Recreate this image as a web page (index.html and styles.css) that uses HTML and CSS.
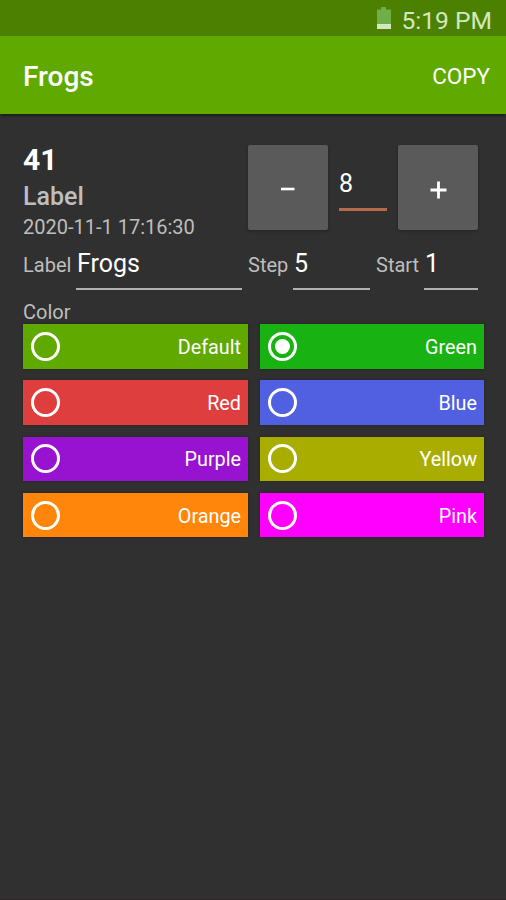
FILE: index.html
```html
<!DOCTYPE html>
<html lang="en">
<head>
<meta charset="utf-8">
<title>Frogs</title>
<link rel="stylesheet" href="styles.css">
</head>
<body>
<div class="status">
  <svg class="battery" width="16" height="23" viewBox="0 0 16 23"><path d="M1 2.500h4V0h5v2.500h5V17H1z" fill="#6fae48"/><path d="M1 17h14v5H1z" fill="#d3e8c0"/></svg>
  <span class="time">5:19 PM</span>
</div>
<header class="appbar"><h1 class="title">Frogs</h1><span class="copy">COPY</span></header>
<main class="content">
  <section class="top">
    <div class="info">
      <div class="count">41</div>
      <div class="name">Label</div>
      <div class="date">2020-11-1 17:16:30</div>
    </div>
    <div class="step-btn"><svg width="80" height="85" viewBox="0 0 80 85"><path d="M33 44h13.500" stroke="#fff" stroke-width="2.600"/></svg></div>
    <div class="amount">8</div>
    <div class="step-btn"><svg width="80" height="85" viewBox="0 0 80 85"><path d="M32.500 45h16M40.500 36.500v17" stroke="#fff" stroke-width="2.800"/></svg></div>
  </section>
  <section class="fields">
    <span class="caption caption-label">Label</span><span class="input input-label">Frogs</span>
    <span class="caption caption-step">Step</span><span class="input input-step">5</span>
    <span class="caption caption-start">Start</span><span class="input input-start">1</span>
  </section>
  <div class="color-title">Color</div>
  <section class="colors">
    <div class="color default"><span class="radio"></span><span>Default</span></div>
    <div class="color green"><span class="radio checked"></span><span>Green</span></div>
    <div class="color red"><span class="radio"></span><span>Red</span></div>
    <div class="color blue"><span class="radio"></span><span>Blue</span></div>
    <div class="color purple"><span class="radio"></span><span>Purple</span></div>
    <div class="color yellow"><span class="radio"></span><span>Yellow</span></div>
    <div class="color orange"><span class="radio"></span><span>Orange</span></div>
    <div class="color pink"><span class="radio"></span><span>Pink</span></div>
  </section>
</main>
</body>
</html>
```
FILE: styles.css
```css
* { box-sizing: border-box; }
body {
  margin: 0;
  height: 900px;
  overflow: hidden;
  display: flex;
  flex-direction: column;
  background: #303030;
  color: #fff;
  font-family: Roboto, "Liberation Sans", sans-serif;
  white-space: nowrap;
}
.status {
  height: 36px;
  background: #4b8000;
  display: flex;
  justify-content: flex-end;
  align-items: flex-start;
  padding: 7px 14px 0 0;
}
.battery { margin-right: 9px; }
.time { font-size: 24.600px; line-height: 27px; color: #d3e8c0; }
.appbar {
  height: 78px;
  background: #60a900;
  box-shadow: 0 3px 2px -1px #1c1c1c;
  display: flex;
  justify-content: space-between;
  align-items: center;
  padding: 2px 16px 0 23px;
}
.title { margin: 0; font-size: 28px; font-weight: 500; }
.copy { font-size: 22.500px; }
.content {
  flex: 1;
  padding: 31px 22px 0 23px;
  border-bottom: 1px solid #2b222a;
}
.top { display: flex; height: 98px; }
.info { width: 225px; color: #bebebe; }
.count { font-size: 30px; font-weight: 700; line-height: 30px; color: #fff; }
.name { font-size: 25px; font-weight: 500; line-height: 30px; margin-top: 7px; }
.date { font-size: 20px; line-height: 24px; margin-top: 3px; }
.step-btn {
  width: 80px;
  height: 85px;
  background: #5a5a5b;
  border-radius: 2px;
  box-shadow: 0 1px 3px #222;
}
.amount {
  width: 48px;
  height: 66px;
  margin: 0 11px;
  padding-top: 24px;
  font-size: 25px;
  line-height: 30px;
  border-bottom: 3px solid #b56a4a;
}
.fields { display: flex; height: 48px; align-items: flex-start; }
.caption { font-size: 20px; line-height: 24px; padding-top: 10px; color: #bebebe; }
.caption-label { width: 53px; }
.caption-step { width: 45px; margin-left: 6px; }
.caption-start { width: 48px; margin-left: 6px; }
.input {
  height: 47px;
  font-size: 25px;
  line-height: 30px;
  padding: 6px 0 0 1px;
  border-bottom: 2px solid #b0b0b0;
}
.input-label { width: 166px; }
.input-step { width: 77px; }
.input-start { width: 54px; }
.color-title { font-size: 20px; line-height: 24px; height: 33px; padding-top: 9px; color: #bebebe; }
.colors {
  display: grid;
  grid-template-columns: 225px 224px;
  grid-auto-rows: 44.500px;
  gap: 11.800px 12px;
}
.color {
  display: flex;
  align-items: center;
  justify-content: space-between;
  padding: 2px 7px 0 8px;
  font-size: 19.800px;
  box-shadow: 0 0 2px #222;
}
.radio {
  display: flex;
  width: 29px;
  height: 29px;
  margin-bottom: 2px;
  border: 3px solid #fff;
  border-radius: 50%;
  align-items: center;
  justify-content: center;
}
.checked::before {
  content: "";
  width: 15px;
  height: 15px;
  border-radius: 50%;
  background: #fff;
}
.default { background: #60a900; }
.green { background: #18b312; }
.red { background: #df3e3e; }
.blue { background: #5060e0; }
.purple { background: #9713cf; }
.yellow { background: #a9ad00; }
.orange { background: #ff860a; }
.pink { background: #ff00ff; }
```
